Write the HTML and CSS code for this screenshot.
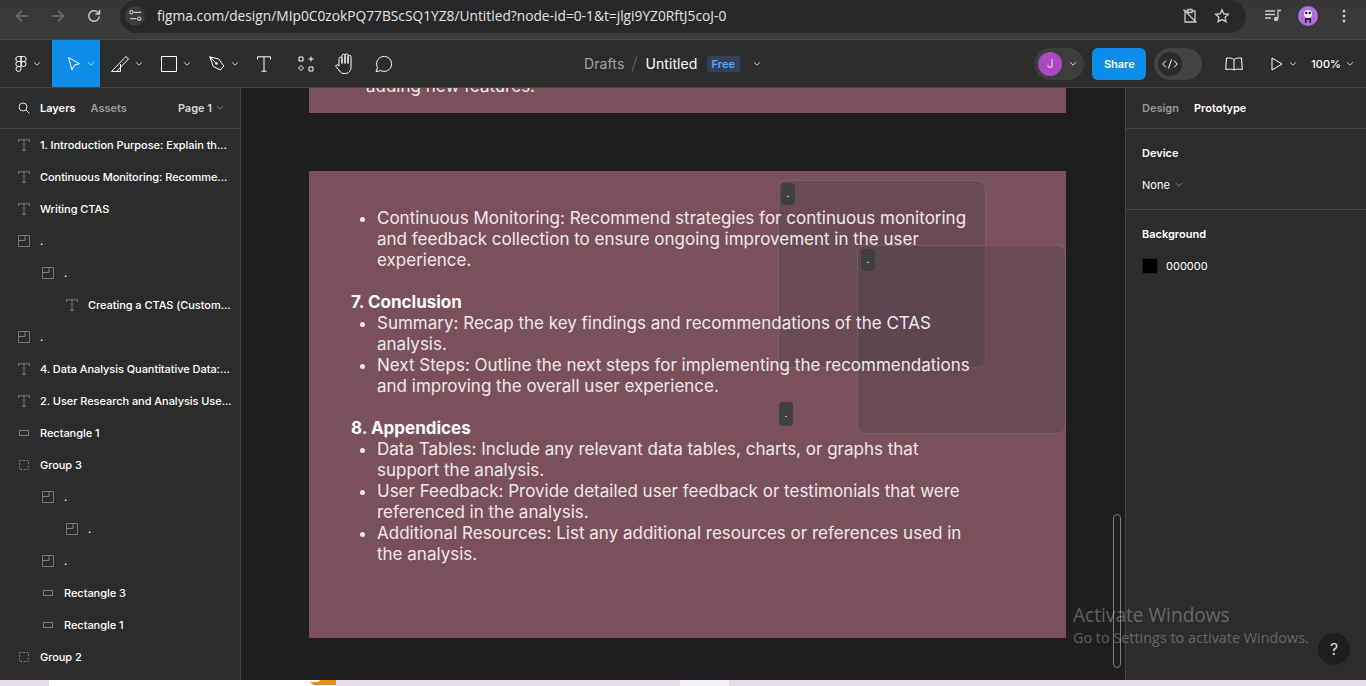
FILE: index.html
```html
<!DOCTYPE html>
<html lang="en">
<head>
    <meta charset="UTF-8">
    <title>Untitled - Figma</title>
    <link rel="stylesheet" href="styles.css">
</head>
<body>
    <svg width="0" height="0" class="defs">
        <symbol id="i-chev" viewBox="0 0 8 6"><path d="M1 1.200l3 3 3-3" fill="none" stroke="currentColor"/></symbol>
        <symbol id="i-text" viewBox="0 0 12 12"><path d="M.5 2.800V.8h11v2M6 .8v10.400M4 11.200h4" fill="none" stroke="currentColor"/></symbol>
        <symbol id="i-frame" viewBox="0 0 12 12"><path d="M.5.5h11v11H.5zM.5 5.500h6.500V.5" fill="none" stroke="currentColor"/></symbol>
        <symbol id="i-rect" viewBox="0 0 10 8"><path d="M.5 1.500h9v5h-9z" fill="none" stroke="currentColor"/></symbol>
        <symbol id="i-group" viewBox="0 0 10 10"><rect x=".5" y=".5" width="9" height="9" fill="none" stroke="currentColor" stroke-dasharray="2 1.500"/></symbol>
    </svg>

    <div class="browser-bar">
        <div class="nav-icons">
            <svg class="dim" width="16" height="16" viewBox="0 0 16 16"><path d="M14 8H2.500M8 2.500L2.500 8 8 13.500" fill="none" stroke="currentColor" stroke-width="1.500"/></svg>
            <svg class="dim" width="16" height="16" viewBox="0 0 16 16"><path d="M2 8h11.500M8 2.500L13.500 8 8 13.500" fill="none" stroke="currentColor" stroke-width="1.500"/></svg>
            <svg width="16" height="16" viewBox="0 0 16 16"><path d="M13.300 8.500A5.300 5.300 0 1 1 11.800 4.300L13.500 6M13.500 2v4h-4" fill="none" stroke="currentColor" stroke-width="1.500"/></svg>
        </div>
        <div class="omnibox">
            <span class="site-btn">
                <svg width="13" height="11" viewBox="0 0 14 12"><path d="M5 2.500h8M1 9.500h7" fill="none" stroke="currentColor" stroke-width="1.400"/><circle cx="2.500" cy="2.500" r="1.800" fill="none" stroke="currentColor" stroke-width="1.200"/><circle cx="11" cy="9.500" r="1.800" fill="none" stroke="currentColor" stroke-width="1.200"/></svg>
            </span>
            <span class="url">figma.com/design/MIp0C0zokPQ77BScSQ1YZ8/Untitled?node-id=0-1&amp;t=jlgi9YZ0RftJ5coJ-0</span>
            <svg class="omni-icon" width="16" height="16" viewBox="0 0 16 16"><path d="M3 3h2.500M10.500 3H13v11H3V3M6 1.500h4v3H6zM1.500 1.500l13 13" fill="none" stroke="currentColor" stroke-width="1.300"/></svg>
            <svg class="omni-icon" width="16" height="16" viewBox="0 0 16 16"><path d="M8 1.800l1.900 4 4.400.5-3.200 3 .8 4.400L8 11.600l-3.900 2.100.8-4.400-3.200-3 4.400-.5z" fill="none" stroke="currentColor" stroke-width="1.400"/></svg>
        </div>
        <div class="browser-right">
            <svg width="16" height="14" viewBox="0 0 16 14"><path d="M0 2h10M0 5.500h10M0 9h6M13 9.500V1.500h3" fill="none" stroke="currentColor" stroke-width="1.300"/><circle cx="11" cy="10" r="2.200" fill="currentColor"/></svg>
            <span class="profile">
                <svg width="12" height="14" viewBox="0 0 12 14"><circle cx="6" cy="5" r="4" fill="#f2eef2"/><circle cx="4.300" cy="4" r="1.200" fill="#222"/><circle cx="7.800" cy="4" r="1.200" fill="#222"/><path d="M3 14V9h6v5H7.500v-3h-3v3z" fill="#222"/></svg>
            </span>
            <svg class="dots" width="4" height="14" viewBox="0 0 4 14"><circle cx="2" cy="2" r="1.500" fill="currentColor"/><circle cx="2" cy="7" r="1.500" fill="currentColor"/><circle cx="2" cy="12" r="1.500" fill="currentColor"/></svg>
        </div>
    </div>

    <header class="toolbar">
        <div class="tools">
            <span class="tool tool-menu">
                <svg width="12" height="17" viewBox="0 0 12 16"><path d="M6 1H3.300a2.500 2.500 0 0 0 0 5H6zM6 1h2.700a2.500 2.500 0 0 1 0 5H6zM6 6H3.300a2.500 2.500 0 0 0 0 5H6zM6 8.500a2.500 2.500 0 1 0 5 0 2.500 2.500 0 0 0-5 0zM6 11H3.300A2.500 2.500 0 1 0 6 13.500z" fill="none" stroke="currentColor"/></svg>
                <svg class="chev" width="8" height="6"><use href="#i-chev"/></svg>
            </span>
            <span class="tool tool-move">
                <svg width="14" height="16" viewBox="0 0 14 16"><path d="M1.500 1.500l11 6.200-5 1.300-2.500 5z" fill="none" stroke="currentColor"/></svg>
                <svg class="chev" width="8" height="6"><use href="#i-chev"/></svg>
            </span>
            <span class="tool tool-draw">
                <svg width="18" height="16" viewBox="0 0 18 16"><path d="M.5 15.500h9V8M.5 15.500L13 2.500l2-2 2.500 2.500-2 2L5.500 15.500" fill="none" stroke="currentColor"/></svg>
                <svg class="chev" width="8" height="6"><use href="#i-chev"/></svg>
            </span>
            <span class="tool tool-shape">
                <svg width="16" height="16" viewBox="0 0 16 16"><path d="M.5.5h15v15H.5z" fill="none" stroke="currentColor"/></svg>
                <svg class="chev" width="8" height="6"><use href="#i-chev"/></svg>
            </span>
            <span class="tool tool-pen">
                <svg width="16" height="16" viewBox="0 0 16 16"><path d="M.8.8l9 2.200 5 7-3.500 4-7-3.500zM.8.800l6 6" fill="none" stroke="currentColor"/><circle cx="7.500" cy="7.500" r="1.300" fill="currentColor"/></svg>
                <svg class="chev" width="8" height="6"><use href="#i-chev"/></svg>
            </span>
            <span class="tool tool-type">
                <svg width="14" height="16" viewBox="0 0 14 16"><path d="M.5 3.500V.8h13v2.700M7 .8v14.400M4.500 15.200h5" fill="none" stroke="currentColor"/></svg>
            </span>
            <span class="tool tool-res">
                <svg width="16" height="16" viewBox="0 0 16 16"><path d="M1 1h4v4H1zM11 11h4v4h-4zM3 9.500L5.500 12 3 14.500.5 12zM13 .5v5M10.500 3h5" fill="none" stroke="currentColor"/></svg>
            </span>
            <span class="tool tool-hand">
                <svg width="18" height="21" viewBox="0 0 18 21"><path d="M4 13V5.500a1.500 1.500 0 0 1 3 0V10.500V2.800a1.500 1.500 0 0 1 3 0V10.500V2.300a1.500 1.500 0 0 1 3 0V10.500V3.800a1.500 1.500 0 0 1 3 0V14.500c0 3.300-2.500 6-6 6H9c-2 0-3.500-1-4.500-2.500L1 13.500c-.7-1.100.9-2.400 1.900-1.300L4 13" fill="none" stroke="currentColor"/></svg>
            </span>
            <span class="tool tool-comment">
                <svg width="18" height="18" viewBox="0 0 18 18"><path d="M1 16.500l1.500-4A7.500 7.500 0 1 1 5.500 15.500c-1.500.8-3 1-4.500 1z" fill="none" stroke="currentColor"/></svg>
            </span>
        </div>
        <div class="file-title">
            <span class="crumb">Drafts</span>
            <span class="slash"></span>
            <span class="file-name">Untitled</span>
            <span class="badge">Free</span>
            <svg class="chev" width="8" height="6"><use href="#i-chev"/></svg>
        </div>
        <div class="actions">
            <span class="avatar-pill"><span class="avatar">J</span><svg class="chev" width="8" height="6"><use href="#i-chev"/></svg></span>
            <span class="share">Share</span>
            <span class="dev-toggle"><span class="dev-knob"><svg width="16" height="10" viewBox="0 0 16 10"><path d="M4 1.500L.8 5 4 8.500M12 1.500L15.200 5 12 8.500M9.500.5l-3 9" fill="none" stroke="currentColor"/></svg></span></span>
            <svg class="book" width="18" height="14" viewBox="0 0 18 14"><path d="M9 2.500C7.500 1 4 .8 1.500 1L.7 12.500C4 12 7 12 9 13c2-1 5-1 8.300-.5L16.500 1C14 .8 10.500 1 9 2.500zM9 2.500V13" fill="none" stroke="currentColor"/></svg>
            <span class="play"><svg width="12" height="14" viewBox="0 0 12 14"><path d="M1 1l10 6-10 6z" fill="none" stroke="currentColor"/></svg><svg class="chev" width="8" height="6"><use href="#i-chev"/></svg></span>
            <span class="zoom-level">100%<svg class="chev" width="8" height="6"><use href="#i-chev"/></svg></span>
        </div>
    </header>

    <div class="workspace">
        <aside class="left-panel">
            <div class="panel-tabs">
                <svg class="search" width="12" height="12" viewBox="0 0 12 12"><circle cx="5" cy="5" r="4" fill="none" stroke="currentColor"/><path d="M8 8l3.500 3.500" stroke="currentColor"/></svg>
                <span class="tab active">Layers</span>
                <span class="tab">Assets</span>
                <span class="page-pick">Page 1<svg class="chev" width="8" height="6"><use href="#i-chev"/></svg></span>
            </div>
            <ul class="layers">
                <li class="layer"><svg width="12" height="12"><use href="#i-text"/></svg><span>1. Introduction Purpose: Explain th...</span></li>
                <li class="layer"><svg width="12" height="12"><use href="#i-text"/></svg><span>Continuous Monitoring: Recomme...</span></li>
                <li class="layer"><svg width="12" height="12"><use href="#i-text"/></svg><span>Writing CTAS</span></li>
                <li class="layer"><svg width="12" height="12"><use href="#i-frame"/></svg><span>.</span></li>
                <li class="layer lvl1"><svg width="12" height="12"><use href="#i-frame"/></svg><span>.</span></li>
                <li class="layer lvl2"><svg width="12" height="12"><use href="#i-text"/></svg><span>Creating a CTAS (Custom...</span></li>
                <li class="layer"><svg width="12" height="12"><use href="#i-frame"/></svg><span>.</span></li>
                <li class="layer"><svg width="12" height="12"><use href="#i-text"/></svg><span>4. Data Analysis Quantitative Data:...</span></li>
                <li class="layer"><svg width="12" height="12"><use href="#i-text"/></svg><span>2. User Research and Analysis Use...</span></li>
                <li class="layer"><svg class="small" width="10" height="8"><use href="#i-rect"/></svg><span>Rectangle 1</span></li>
                <li class="layer"><svg class="small" width="10" height="10"><use href="#i-group"/></svg><span>Group 3</span></li>
                <li class="layer lvl1"><svg width="12" height="12"><use href="#i-frame"/></svg><span>.</span></li>
                <li class="layer lvl2"><svg width="12" height="12"><use href="#i-frame"/></svg><span>.</span></li>
                <li class="layer lvl1"><svg width="12" height="12"><use href="#i-frame"/></svg><span>.</span></li>
                <li class="layer lvl1"><svg class="small" width="10" height="8"><use href="#i-rect"/></svg><span>Rectangle 3</span></li>
                <li class="layer lvl1"><svg class="small" width="10" height="8"><use href="#i-rect"/></svg><span>Rectangle 1</span></li>
                <li class="layer"><svg class="small" width="10" height="10"><use href="#i-group"/></svg><span>Group 2</span></li>
            </ul>
        </aside>

        <main class="canvas">
            <div class="frame frame-top"><p class="cut-text">adding new features.</p></div>
            <div class="frame frame-main">
                <div class="ghost ghost-a"></div>
                <div class="ghost ghost-b"></div>
                <div class="doc-text">
                    <ul class="doc-list">
                        <li>Continuous Monitoring: Recommend strategies for continuous monitoring and feedback collection to ensure ongoing improvement in the user experience.</li>
                    </ul>
                    <p class="doc-gap">&nbsp;</p>
                    <h3 class="doc-head">7. Conclusion</h3>
                    <ul class="doc-list">
                        <li>Summary: Recap the key findings and recommendations of the CTAS analysis.</li>
                        <li>Next Steps: Outline the next steps for implementing the recommendations and improving the overall user experience.</li>
                    </ul>
                    <p class="doc-gap">&nbsp;</p>
                    <h3 class="doc-head">8. Appendices</h3>
                    <ul class="doc-list">
                        <li>Data Tables: Include any relevant data tables, charts, or graphs that support the analysis.</li>
                        <li>User Feedback: Provide detailed user feedback or testimonials that were referenced in the analysis.</li>
                        <li>Additional Resources: List any additional resources or references used in the analysis.</li>
                    </ul>
                </div>
            </div>
            <span class="chip chip-a">.</span>
            <span class="chip chip-b">.</span>
            <span class="chip chip-c">.</span>
            <div class="scroll-thumb"></div>
        </main>

        <aside class="right-panel">
            <div class="panel-tabs right-tabs">
                <span class="tab">Design</span>
                <span class="tab active">Prototype</span>
            </div>
            <section class="prop-section">
                <h4>Device</h4>
                <p class="prop-row">None<svg class="chev" width="8" height="6"><use href="#i-chev"/></svg></p>
            </section>
            <section class="prop-section">
                <h4>Background</h4>
                <p class="prop-row"><span class="swatch"></span>000000</p>
            </section>
        </aside>
    </div>

    <div class="taskbar-edge"><span class="edge-white"><span class="edge-orange"></span></span><span class="edge-light"></span></div>

    <div class="activate">
        <div class="activate-title">Activate Windows</div>
        <div class="activate-sub">Go to Settings to activate Windows.</div>
    </div>
    <span class="help">?</span>
</body>
</html>
```

FILE: styles.css
```css
html, body {
    margin: 0;
    padding: 0;
    height: 686px;
    overflow: hidden;
}
body {
    position: relative;
    display: flex;
    flex-direction: column;
    background-color: #e3dde8;
    font-family: Inter, "Liberation Sans", sans-serif;
    font-size: 11px;
    color: #fff;
}
svg {
    display: block;
    flex: none;
}
.defs {
    position: absolute;
}

/* browser bar */
.browser-bar {
    height: 39px;
    flex: none;
    display: flex;
    align-items: flex-start;
    background: linear-gradient(#373737, #3c3c3c);
    border-bottom: 1px solid #4a4a4a;
    color: #c7c7c7;
}
.nav-icons {
    display: flex;
    gap: 20px;
    padding: 8px 0 0 14px;
    width: 106px;
    box-sizing: border-box;
}
.nav-icons .dim {
    color: #707070;
}
.omnibox {
    width: 1126px;
    height: 33px;
    box-sizing: border-box;
    background-color: #282828;
    border-radius: 17px;
    display: flex;
    align-items: center;
    padding: 0 16px 2px 5px;
    margin-left: 14px;
}
.site-btn {
    width: 20px;
    height: 20px;
    border-radius: 50%;
    background-color: #3b3b3b;
    display: flex;
    align-items: center;
    justify-content: center;
    margin-right: 12px;
}
.url {
    font-family: "Open Sans", "Liberation Sans", sans-serif;
    font-size: 13.75px;
    color: #e3e3e3;
    flex: 1;
}
.omni-icon {
    margin-left: 16px;
}
.browser-right {
    display: flex;
    align-items: center;
    gap: 17px;
    padding: 6px 0 0 19px;
}
.profile {
    width: 20px;
    height: 20px;
    border-radius: 50%;
    background-color: #b06fe0;
    display: flex;
    align-items: center;
    justify-content: center;
    overflow: hidden;
}
.dots {
    margin-left: 7px;
}

/* figma toolbar */
.toolbar {
    height: 47px;
    flex: none;
    display: flex;
    align-items: center;
    justify-content: space-between;
    background-color: #2c2c2c;
    position: relative;
}
.tools {
    display: flex;
    align-items: center;
    height: 47px;
}
.tool {
    display: flex;
    align-items: center;
    gap: 6px;
    height: 47px;
    width: 48px;
    box-sizing: border-box;
    padding-left: 13px;
}
.tool-menu { width: 52px; padding-left: 15px; }
.tool-move { background-color: #0d8ce9; padding-left: 15px; }
.tool-draw { padding-left: 11px; }
.tool-type { width: 40px; }
.tool-res { width: 40px; padding-left: 14px; }
.tool-hand { width: 40px; padding-left: 11px; }
.tool-comment { width: 40px; padding-left: 11px; }
.chev {
    color: #d4d4d4;
}
.file-title {
    position: absolute;
    left: 584px;
    top: 0;
    height: 47px;
    display: flex;
    align-items: center;
    font-size: 14px;
    letter-spacing: 0.1px;
}
.crumb { color: #a3a3a3; }
.slash {
    width: 1px;
    height: 16px;
    background-color: #666;
    transform: rotate(18deg);
    margin: 0 10px;
}
.badge {
    background-color: #34415e;
    color: #5aa9f5;
    font-size: 11px;
    font-weight: 600;
    padding: 1px 5px;
    border-radius: 3px;
    line-height: 14px;
    letter-spacing: 0;
    margin: 0 13px 0 9px;
}
.actions {
    display: flex;
    align-items: center;
    padding-top: 1px;
}
.avatar-pill {
    width: 50px;
    height: 32px;
    border-radius: 16px;
    background-color: #3d3d3d;
    display: flex;
    align-items: center;
    gap: 7px;
    padding-left: 4px;
    box-sizing: border-box;
}
.avatar {
    width: 24px;
    height: 24px;
    border-radius: 50%;
    background-color: #a94ac0;
    color: #e8c8ee;
    font-size: 12px;
    text-align: center;
    line-height: 24px;
}
.share {
    width: 54px;
    height: 32px;
    background-color: #0d8ce9;
    border-radius: 6px;
    font-size: 11px;
    font-weight: 600;
    text-align: center;
    line-height: 32px;
    margin-left: 8px;
}
.dev-toggle {
    width: 48px;
    height: 32px;
    border-radius: 16px;
    background-color: #444;
    margin-left: 8px;
    padding: 4px;
    box-sizing: border-box;
}
.dev-knob {
    width: 24px;
    height: 24px;
    border-radius: 50%;
    background-color: #2c2c2c;
    display: flex;
    align-items: center;
    justify-content: center;
}
.book {
    margin-left: 23px;
}
.play {
    display: flex;
    align-items: center;
    gap: 6px;
    margin-left: 28px;
}
.zoom-level {
    display: flex;
    align-items: center;
    gap: 5px;
    font-weight: 500;
    margin-left: 14px;
    margin-right: 12px;
}

/* panels */
.workspace {
    height: 593px;
    flex: none;
    display: flex;
    border-top: 1px solid #444;
    box-sizing: border-box;
}
.left-panel {
    width: 240px;
    flex: none;
    background-color: #2c2c2c;
    border-right: 1px solid #444;
}
.panel-tabs {
    height: 40px;
    display: flex;
    align-items: center;
    border-bottom: 1px solid #444;
    font-weight: 600;
}
.tab {
    color: #9a9a9a;
}
.tab.active {
    color: #fff;
}
.search {
    color: #ddd;
    margin: 0 10px 0 18px;
}
.panel-tabs .tab + .tab {
    margin-left: 15px;
}
.page-pick {
    margin-left: auto;
    margin-right: 16px;
    display: flex;
    align-items: center;
    gap: 4px;
    color: #d8d8d8;
}
.page-pick .chev {
    color: #888;
}
.layers {
    list-style: none;
    margin: 0;
    padding: 0;
}
.layer {
    height: 32px;
    display: flex;
    align-items: center;
    padding-left: 18px;
    gap: 10px;
    font-weight: 450;
    letter-spacing: -0.05px;
    white-space: nowrap;
}
.layer svg {
    color: #7d7d7d;
}
.layer svg.small {
    margin: 0 1px;
}
.lvl1 { padding-left: 42px; }
.lvl2 { padding-left: 66px; }

.canvas {
    width: 884px;
    flex: none;
    position: relative;
    overflow: hidden;
    background-color: #1e1e1e;
}
.frame {
    position: absolute;
    left: 68px;
    width: 757px;
    background-color: #7a505d;
    box-sizing: border-box;
}
.frame-top {
    top: -60px;
    height: 85px;
    overflow: hidden;
}
.cut-text {
    position: absolute;
    top: 48px;
    left: 57px;
    margin: 0;
    font-size: 17px;
    line-height: 21px;
    color: #f0e9eb;
}
.frame-main {
    top: 83px;
    height: 467px;
}
.doc-text {
    position: relative;
    padding: 37px 90px 0 42px;
    font-size: 17px;
    line-height: 21px;
    color: #f0e9eb;
}
.doc-list {
    margin: 0;
    padding-left: 26px;
}
.doc-gap {
    margin: 0;
}
.doc-head {
    margin: 0;
    font-size: 17px;
    line-height: 21px;
    font-weight: 700;
    color: #fff;
}
.ghost {
    position: absolute;
    background-color: rgba(66, 62, 66, 0.29);
    border: 1px solid rgba(150, 150, 150, 0.3);
    border-radius: 8px;
    box-sizing: border-box;
}
.ghost-a {
    left: 469px;
    top: 9px;
    width: 208px;
    height: 188px;
}
.ghost-b {
    left: 548px;
    top: 74px;
    width: 209px;
    height: 189px;
}
.chip {
    position: absolute;
    width: 14px;
    height: 22px;
    border-radius: 4px;
    background-color: #404040;
    font-size: 9px;
    line-height: 22px;
    text-align: center;
}
.chip-a { left: 540px; top: 95px; }
.chip-b { left: 620px; top: 161px; }
.chip-c { left: 538px; top: 314px; height: 24px; line-height: 24px; }
.scroll-thumb {
    position: absolute;
    left: 872px;
    top: 426px;
    width: 6px;
    height: 152px;
    border: 1px solid #7c7c7c;
    border-radius: 4px;
}

.right-panel {
    flex: 1;
    background-color: #2c2c2c;
    border-left: 1px solid #444;
}
.right-tabs {
    padding-left: 16px;
}
.prop-section {
    padding: 16px 16px 0;
    height: 64px;
    font-size: 11px;
}
.prop-section + .prop-section {
    border-top: 1px solid #444;
}
.prop-section h4 {
    margin: 0;
    font-size: 11px;
    font-weight: 600;
    line-height: 16px;
}
.prop-row {
    margin: 16px 0 0;
    display: flex;
    align-items: center;
    gap: 5px;
    line-height: 16px;
}
.prop-row .chev {
    color: #888;
}
.swatch {
    width: 16px;
    height: 16px;
    background-color: #000;
    margin-right: 3px;
    border: 1px solid #222;
    box-sizing: border-box;
}

/* windows bits over everything */
.taskbar-edge {
    flex: 1;
    display: flex;
}
.edge-white {
    display: block;
    margin-left: 49px;
    width: 287px;
    background-color: #fff;
    position: relative;
}
.edge-orange {
    position: absolute;
    right: 0;
    top: 0;
    width: 26px;
    height: 5px;
    background-color: #f08a1d;
    clip-path: polygon(0 40%, 30% 40%, 40% 0, 100% 0, 100% 100%, 12% 100%);
}
.edge-light {
    display: block;
    margin-left: 344px;
    width: 49px;
    background-color: #f3eff6;
}
.activate {
    position: absolute;
    left: 1073px;
    top: 603px;
    color: rgba(255, 255, 255, 0.3);
    font-family: "Open Sans", "Liberation Sans", sans-serif;
}
.activate-title {
    font-size: 19.1px;
    line-height: 24px;
}
.activate-sub {
    font-size: 14.4px;
    line-height: 21px;
}
.help {
    position: absolute;
    left: 1318px;
    top: 633px;
    width: 32px;
    height: 32px;
    border-radius: 50%;
    background-color: #1e1e1e;
    color: #d8d8d8;
    font-size: 16px;
    line-height: 32px;
    text-align: center;
}
```
